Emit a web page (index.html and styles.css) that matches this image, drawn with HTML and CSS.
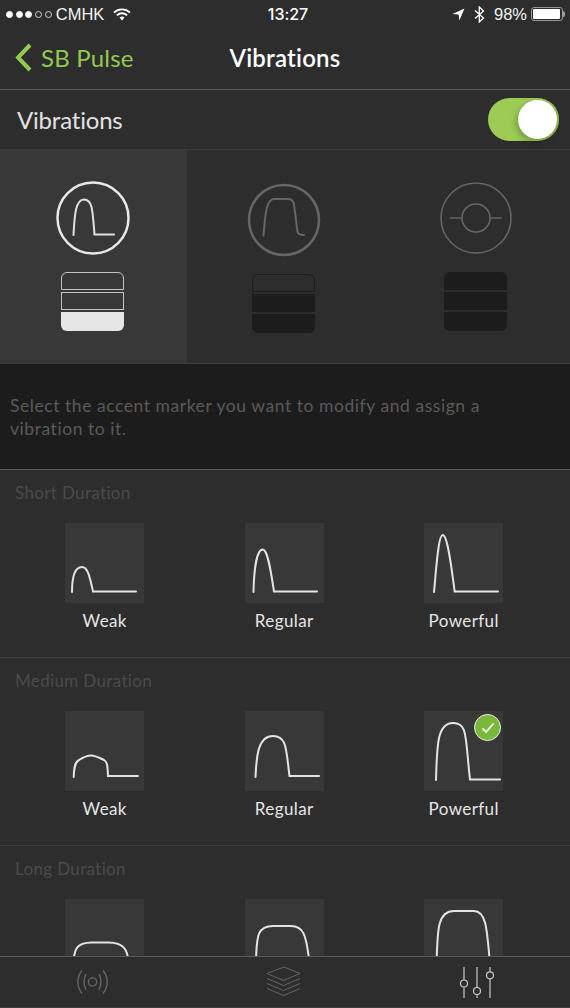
FILE: index.html
```html
<!DOCTYPE html>
<html lang="en">
<head>
    <meta charset="UTF-8">
    <meta name="viewport" content="width=device-width, initial-scale=1.0">
    <title>Vibrations</title>
    <link rel="stylesheet" href="styles.css">
</head>
<body>
    <div class="status-bar">
        <div class="status-left">
            <span class="signal">
                <i class="dot on"></i><i class="dot on"></i><i class="dot on"></i><i class="dot"></i><i class="dot"></i>
            </span>
            <span class="carrier">CMHK</span>
            <svg class="wifi" width="18" height="13" viewBox="0 0 18 13">
                <path d="M1 4.6 A11.5 11.5 0 0 1 17 4.6" fill="none" stroke="#fff" stroke-width="1.8"/>
                <path d="M3.9 7.3 A7.4 7.4 0 0 1 14.1 7.3" fill="none" stroke="#fff" stroke-width="1.8"/>
                <path d="M6.5 9.6 A3.8 3.8 0 0 1 11.5 9.6 L9 12.4 Z" fill="#fff"/>
            </svg>
        </div>
        <div class="status-time">13:27</div>
        <div class="status-right">
            <svg class="arrow" width="13" height="13" viewBox="0 0 13 13">
                <path d="M12.5 .5 L.5 6 L6.6 6.6 L7.4 12.5 Z" fill="#fff"/>
            </svg>
            <svg class="bluetooth" width="11" height="17" viewBox="0 0 11 17">
                <path d="M1 4.5 L9.5 12 L5.3 16 V1 L9.5 5 L1 12.5" fill="none" stroke="#fff" stroke-width="1.3"/>
            </svg>
            <span class="battery-pct">98%</span>
            <span class="battery"><span class="battery-fill"></span></span>
        </div>
    </div>

    <div class="nav-bar">
        <div class="nav-back">
            <svg width="19" height="29" viewBox="0 0 19 29">
                <path d="M16 2 L4 14.500 L16 27" fill="none" stroke="#93c950" stroke-width="4"/>
            </svg>
            <span>SB Pulse</span>
        </div>
        <div class="nav-title">Vibrations</div>
    </div>

    <div class="toggle-row">
        <span class="toggle-label">Vibrations</span>
        <span class="toggle"><span class="toggle-knob"></span></span>
    </div>

    <div class="markers">
        <div class="marker active">
            <svg width="76" height="76" viewBox="0 0 76 76">
                <circle cx="38" cy="38" r="35.500" fill="none" stroke="#e8e8e8" stroke-width="2.500"/>
                <path d="M18.500 55 C19.500 38 20 19.500 29 19.500 C37 19.500 37.500 28 39.500 54.500 H59" fill="none" stroke="#e0e0e0" stroke-width="2" stroke-linecap="round"/>
            </svg>
            <div class="stack">
                <div class="band outline first"></div>
                <div class="band outline"></div>
                <div class="band filled last"></div>
            </div>
        </div>
        <div class="marker shifted">
            <svg width="76" height="76" viewBox="0 0 76 76">
                <circle cx="38" cy="38" r="35" fill="none" stroke="#666" stroke-width="2.500"/>
                <path d="M17.500 53.500 C19 40 19 17 28 17 H42 C48 17 48 22 49 30 L51.500 50 C52 52 53 53 58 53" fill="none" stroke="#666" stroke-width="2" stroke-linecap="round"/>
            </svg>
            <div class="stack">
                <div class="band dark-outline first"></div>
                <div class="band dark"></div>
                <div class="band dark last"></div>
            </div>
        </div>
        <div class="marker last-marker">
            <svg width="76" height="76" viewBox="0 0 76 76">
                <circle cx="38" cy="38" r="35" fill="none" stroke="#666" stroke-width="1.500"/>
                <circle cx="38" cy="38" r="14" fill="none" stroke="#666" stroke-width="1.500"/>
                <path d="M12 38 H24 M52 38 H64" fill="none" stroke="#666" stroke-width="1.500"/>
            </svg>
            <div class="stack">
                <div class="band dark first"></div>
                <div class="band dark"></div>
                <div class="band dark last"></div>
            </div>
        </div>
    </div>

    <div class="hint">Select the accent marker you want to modify and assign a vibration to it.</div>

    <div class="list">
        <div class="group">
            <div class="group-title">Short Duration</div>
            <div class="options">
                <div class="option">
                    <div class="tile"><svg width="79" height="80" viewBox="0 0 79 80"><path d="M7 69 C7 52 11 44 17 44 C23 44 25 55 28 68.500 H71"/></svg></div>
                    <div class="option-label">Weak</div>
                </div>
                <div class="option">
                    <div class="tile"><svg width="79" height="80" viewBox="0 0 79 80"><path d="M8.500 69 C9 45 12 26.500 17.700 26.500 C23 26.500 26 50 29 68.500 H72"/></svg></div>
                    <div class="option-label">Regular</div>
                </div>
                <div class="option">
                    <div class="tile"><svg width="79" height="80" viewBox="0 0 79 80"><path d="M10 69 C12 50 14 12 18.700 12 C24 12 28 50 30.700 68.500 H74"/></svg></div>
                    <div class="option-label">Powerful</div>
                </div>
            </div>
        </div>
        <div class="group">
            <div class="group-title">Medium Duration</div>
            <div class="options">
                <div class="option">
                    <div class="tile"><svg width="79" height="80" viewBox="0 0 79 80"><path d="M8.700 66 C9 56 10 51 14 49 C18 46.500 22 44.500 26 44.500 C30 44.500 34 46.500 39 49 C42.500 51 42.500 55 43 65 H73"/></svg></div>
                    <div class="option-label">Weak</div>
                </div>
                <div class="option">
                    <div class="tile"><svg width="79" height="80" viewBox="0 0 79 80"><path d="M10.500 66 C11.500 50 11.500 25 28 25 C42 25 41 38 44.500 65 H74"/></svg></div>
                    <div class="option-label">Regular</div>
                </div>
                <div class="option">
                    <div class="tile">
                        <svg width="79" height="80" viewBox="0 0 79 80"><path d="M12 69 C13 35 13 12 29 12 C44 12 41 25 46 68.500 H76"/></svg>
                        <span class="check">
                            <svg width="14" height="12" viewBox="0 0 14 12"><path d="M1.500 6.500 L5 10 L12.500 1.500" fill="none" stroke="#fff" stroke-width="1.800"/></svg>
                        </span>
                    </div>
                    <div class="option-label">Powerful</div>
                </div>
            </div>
        </div>
        <div class="group">
            <div class="group-title">Long Duration</div>
            <div class="options">
                <div class="option">
                    <div class="tile"><svg width="79" height="80" viewBox="0 0 79 80"><path d="M9 60 C9.500 48 14 44 26 43.500 H44 C56 44 62 48 63 60"/></svg></div>
                </div>
                <div class="option">
                    <div class="tile"><svg width="79" height="80" viewBox="0 0 79 80"><path d="M11 60 C12 40 11 27 28 27 H46 C58 27 61 35 64 60"/></svg></div>
                </div>
                <div class="option">
                    <div class="tile"><svg width="79" height="80" viewBox="0 0 79 80"><path d="M12.700 60 C13.500 30 14 12 30 12 H50 C62 12 63 30 65.500 60"/></svg></div>
                </div>
            </div>
        </div>
    </div>

    <div class="tab-bar">
        <div class="tab tab-left">
            <svg width="33" height="26" viewBox="0 0 36 28" fill="none" stroke="#666" stroke-width="1.500">
                <circle cx="18" cy="14" r="4.500"/>
                <path d="M11 5.500 C8 10 8 18 11 22.500 M25 5.500 C28 10 28 18 25 22.500"/>
                <path d="M6.500 1.500 C.500 9 .500 19 6.500 26.500 M29.500 1.500 C35.500 9 35.500 19 29.500 26.500"/>
            </svg>
        </div>
        <div class="tab">
            <svg width="35" height="33" viewBox="0 0 35 33" fill="none" stroke="#666" stroke-width="1">
                <path d="M18 1 L34 7.500 L17.500 14.500 L1 7.500 Z"/>
                <path d="M1 12.500 L17.500 19.500 L34 12.500"/>
                <path d="M1 17.500 L17.500 24.500 L34 17.500"/>
                <path d="M1 22.500 L17.500 29.500 L34 22.500"/>
            </svg>
        </div>
        <div class="tab tab-right">
            <svg width="36" height="32" viewBox="0 0 36 32" fill="none" stroke="#c8c8c8" stroke-width="1.200">
                <path d="M5 1 V14 M5 21 V32 M18 1 V21.500 M18 28.500 V32 M31 1 V5.800 M31 12.800 V32"/>
                <circle cx="5" cy="17.500" r="3.500"/>
                <circle cx="18" cy="25" r="3.500"/>
                <circle cx="31" cy="9.300" r="3.500"/>
            </svg>
        </div>
    </div>
</body>
</html>
```

FILE: styles.css
```css
* {
    box-sizing: border-box;
}

html, body {
    height: 100%;
}

body {
    margin: 0;
    display: flex;
    flex-direction: column;
    overflow: hidden;
    background: #2d2d2d;
    color: #fff;
    font-family: Lato, "Open Sans", sans-serif;
    font-variant-ligatures: none;
}

/* Status bar */
.status-bar {
    flex: none;
    height: 30px;
    padding-bottom: 2px;
    display: grid;
    grid-template-columns: 260px 56px 1fr;
    align-items: center;
    font-family: "Liberation Sans", sans-serif;
    font-size: 16.500px;
}

.status-left {
    display: flex;
    align-items: center;
    padding-left: 6px;
}

.signal {
    display: flex;
    gap: 2.700px;
}

.dot {
    width: 7px;
    height: 7px;
    border-radius: 50%;
    border: 1px solid #ccc;
}

.dot.on {
    background: #fff;
    border-color: #fff;
}

.carrier {
    margin-left: 4px;
    color: #f2f2f2;
}

.wifi {
    margin-left: 9px;
}

.status-time {
    text-align: center;
    font-family: Inter, sans-serif;
    font-size: 16px;
    font-weight: 500;
}

.status-right {
    display: flex;
    align-items: center;
    justify-content: flex-end;
    padding-right: 6px;
}

.bluetooth {
    margin-left: 9px;
}

.battery-pct {
    margin-left: 9px;
    color: #f2f2f2;
}

.battery {
    width: 32px;
    height: 14px;
    margin-left: 4px;
    margin-right: 1px;
    padding: 1px;
    position: relative;
    border: 1px solid #999;
    border-radius: 3px;
}

.battery::after {
    content: "";
    position: absolute;
    right: -3px;
    top: 3px;
    width: 2px;
    height: 6px;
    background: #999;
    border-radius: 0 2px 2px 0;
}

.battery-fill {
    display: block;
    height: 100%;
    width: 97%;
    background: #fff;
    border-radius: 1px;
}

/* Nav */
.nav-bar {
    flex: none;
    height: 60px;
    display: grid;
    grid-template-columns: 1fr auto 1fr;
    align-items: center;
    padding: 0 0 4px 0;
    border-bottom: 1px solid #5a5a5a;
}

.nav-back {
    grid-column: 1;
    grid-row: 1;
    display: flex;
    align-items: center;
    gap: 8px;
    padding-left: 14px;
    color: #93c950;
    font-size: 24px;
    letter-spacing: .2px;
}

.nav-title {
    grid-column: 2;
    grid-row: 1;
    font-size: 24px;
    font-weight: 600;
    letter-spacing: .2px;
}

.toggle-row {
    flex: none;
    height: 60px;
    display: flex;
    align-items: center;
    justify-content: space-between;
    padding: 0 11px 0 17px;
    border-bottom: 1px solid #3c3c3c;
}

.toggle-label {
    font-size: 24px;
    letter-spacing: -.2px;
    color: #e2e2e2;
}

.toggle {
    width: 71px;
    height: 43px;
    padding: 2px 2px 0 0;
    display: flex;
    justify-content: flex-end;
    border-radius: 22px;
    background: #9ccc55;
    box-shadow: inset -1px 0 1px #7aa53f;
}

.toggle-knob {
    width: 39px;
    height: 39px;
    border-radius: 50%;
    background: #fff;
    box-shadow: -2px 3px 6px rgba(0, 0, 0, .25);
}

/* Marker picker */
.markers {
    flex: none;
    height: 214px;
    display: grid;
    grid-template-columns: 187px 193px 190px;
    border-bottom: 1px solid #3c3c3c;
}

.marker {
    display: flex;
    flex-direction: column;
    align-items: center;
    gap: 16px;
    padding-top: 30px;
}

.marker.active {
    padding-right: 2px;
    background: #383838;
}

.marker.shifted {
    padding-top: 32px;
}

.marker.last-marker {
    padding-left: 1px;
}

.marker svg {
    display: block;
}

.stack {
    width: 63px;
    display: flex;
    flex-direction: column;
    gap: 2px;
}

.band {
    height: 18px;
}

.band.first {
    border-radius: 6px 6px 0 0;
}

.band.last {
    height: 19px;
    border-radius: 0 0 6px 6px;
}

.band.outline {
    border: 1.500px solid #c4c4c4;
}

.band.filled {
    background: #e6e6e6;
}

.band.dark {
    background: #1c1c1c;
}

.band.dark-outline {
    border: 1px solid #1c1c1c;
}

.hint {
    flex: none;
    height: 106px;
    padding: 30px 70px 0 10px;
    background: #1c1c1c;
    border-bottom: 1px solid #5a5a5a;
    color: #5a5a5a;
    font-size: 17.500px;
    line-height: 23px;
    letter-spacing: .55px;
}

/* Vibration list */
.list {
    flex: 1;
    min-height: 0;
    overflow: hidden;
}

.group {
    padding: 13px 0 26px 15px;
    border-bottom: 1px solid #3f3f3f;
}

.group-title {
    height: 20px;
    line-height: 20px;
    margin-bottom: 20px;
    color: #4b4b4b;
    font-size: 17px;
    letter-spacing: .35px;
}

.options {
    display: grid;
    grid-template-columns: repeat(3, 179.500px);
}

.option {
    display: flex;
    flex-direction: column;
    align-items: center;
}

.tile {
    width: 79px;
    height: 80px;
    position: relative;
    background: #383838;
}

.tile > svg {
    display: block;
}

.tile > svg path {
    fill: none;
    stroke: #e4e4e4;
    stroke-width: 2;
    stroke-linecap: round;
}

.check {
    position: absolute;
    top: 3px;
    right: 2px;
    width: 27px;
    height: 27px;
    display: flex;
    align-items: center;
    justify-content: center;
    border-radius: 50%;
    border: 1.500px solid #eee;
    background: #7ab83c;
}

.option-label {
    margin-top: 8px;
    line-height: 20px;
    font-size: 17px;
    letter-spacing: .4px;
    color: #e6e6e6;
}

/* Tabs */
.tab-bar {
    flex: none;
    height: 52px;
    display: grid;
    grid-template-columns: 187px 193px 190px;
    align-items: center;
    background: #2d2d2d;
    border-top: 1px solid #5a5a5a;
    border-bottom: 1px solid #3c3c3c;
}

.tab {
    display: flex;
    justify-content: center;
}

.tab-left {
    padding-right: 2px;
}

.tab-right {
    padding-left: 3px;
}

.tab svg {
    display: block;
}
```
